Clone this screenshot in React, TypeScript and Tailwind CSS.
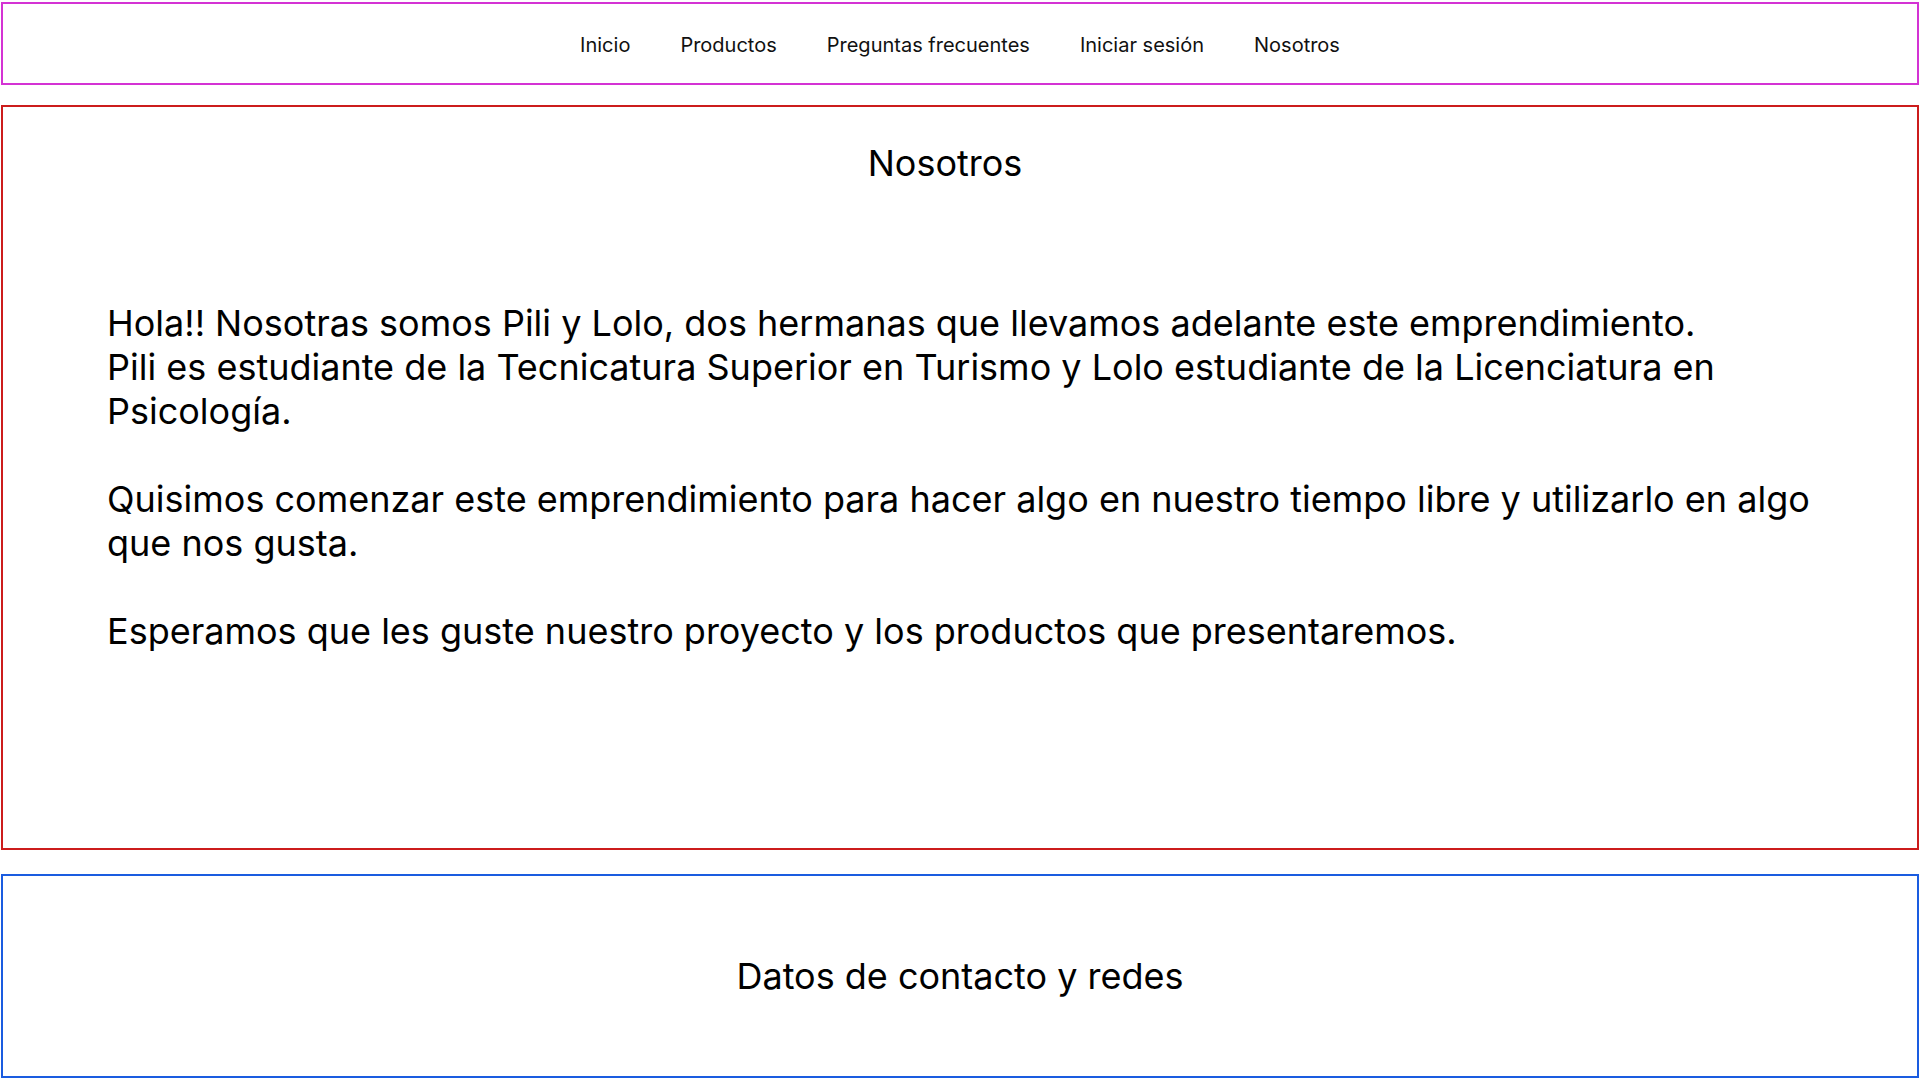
import React from 'react';

const links = ['Inicio', 'Productos', 'Preguntas frecuentes', 'Iniciar sesión', 'Nosotros'];

const Header = () => (
  <header className="mx-px mt-[2px] h-[83px] border-2 border-[#d433d4] flex items-center justify-center">
    <nav className="flex items-center gap-[50px] text-[20px] text-[#111] pt-[2px]">
      {links.map((l) => (
        <a key={l} href="#" className="leading-none">
          {l}
        </a>
      ))}
    </nav>
  </header>
);

const About = () => (
  <section className="mx-px mt-[20px] h-[745px] border-2 border-[#cc1c1c] px-[104px]">
    <h1 className="pt-[34px] pr-[30px] text-center text-[36px] leading-[44px]">Nosotros</h1>
    <div className="mt-[116px] text-[36px] leading-[44px]">
      <p>
        Hola!! Nosotras somos Pili y Lolo, dos hermanas que llevamos adelante este emprendimiento.
        <br />
        Pili es estudiante de la Tecnicatura Superior en Turismo y Lolo estudiante de la Licenciatura en Psicología.
      </p>
      <p className="mt-[44px]">
        Quisimos comenzar este emprendimiento para hacer algo en nuestro tiempo libre y utilizarlo en algo que nos gusta.
      </p>
      <p className="mt-[44px]">Esperamos que les guste nuestro proyecto y los productos que presentaremos.</p>
    </div>
  </section>
);

const Footer = () => (
  <footer className="mx-px mt-[24px] h-[204px] border-2 border-[#1a5ce0] flex items-center justify-center">
    <h2 className="text-[36px] leading-[44px]">Datos de contacto y redes</h2>
  </footer>
);

export default function App() {
  return (
    <div className="min-h-screen bg-white text-black font-['Inter',sans-serif]">
      <Header />
      <About />
      <Footer />
    </div>
  );
}
